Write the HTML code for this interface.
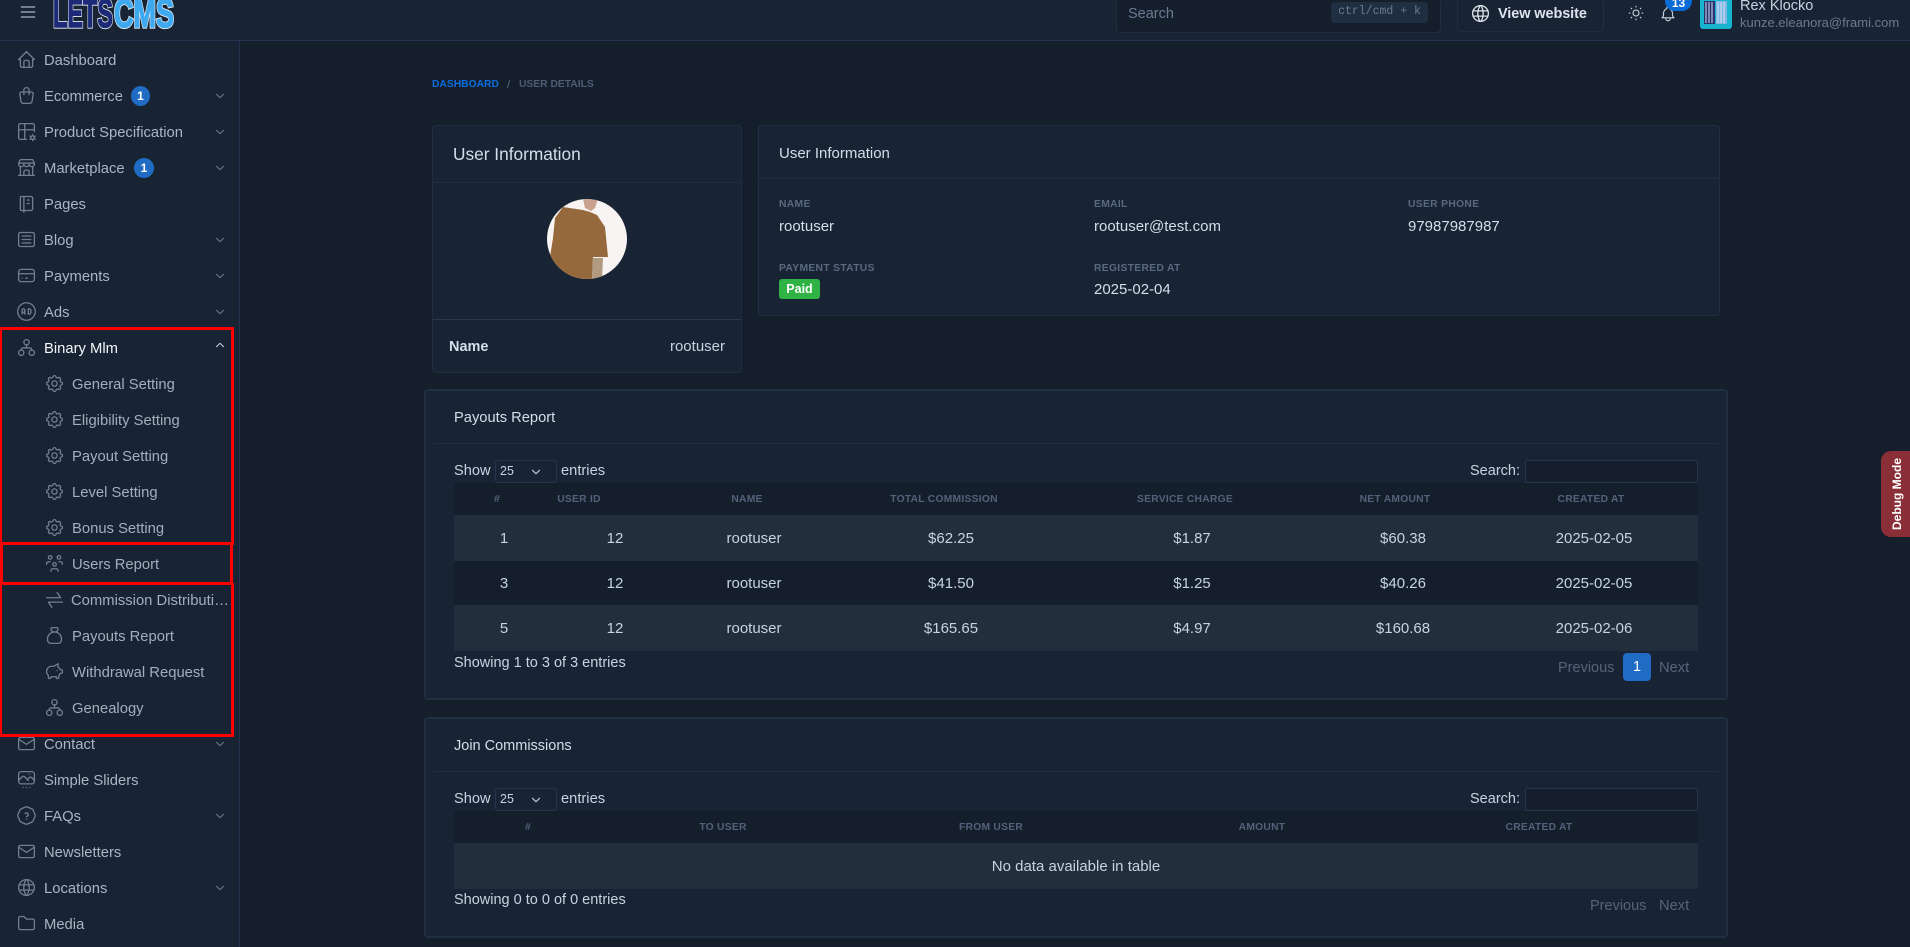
<!DOCTYPE html>
<html lang="en"><head><meta charset="utf-8"><title>User Details</title>
<style>
*{box-sizing:border-box}
html,body{margin:0;padding:0;width:1910px;height:947px;overflow:hidden;background:#151f2c}
body{font-family:"Liberation Sans",sans-serif;font-size:15px;color:#c8d3e1;position:relative}
.a{position:absolute;white-space:nowrap}
.t{position:absolute;white-space:nowrap;line-height:20px;margin-top:1px}
.c{transform:translateX(-50%)}
.r{transform:translateX(-100%)}
.box{position:absolute;background:#182433;border:1px solid #1f2e41;border-radius:4px}
.ln{position:absolute;height:1px;background:#1f2e41}
.nav{position:absolute;left:44px;line-height:20px;color:#aab5c4;font-size:14.800px;white-space:nowrap;margin-top:1px}
.sub{left:72px;color:#a3aebd}
svg.i{position:absolute;width:21px;height:21px;margin:-1px 0 0 -.5px;fill:none;stroke:#727f93;stroke-width:1.5;stroke-linecap:round;stroke-linejoin:round}
svg.ch{position:absolute;left:213px;width:14px;height:14px;fill:none;stroke:#6c7a91;stroke-width:1.800;stroke-linecap:round;stroke-linejoin:round}
.pill{position:absolute;background:#206bc4;color:#fff;border-radius:50%;width:19px;height:20px;font-size:12px;font-weight:bold;text-align:center;line-height:20px}
.rb{position:absolute;border:3px solid #f00}
.lb{position:absolute;font-size:10.300px;font-weight:bold;color:#5a6880;letter-spacing:.33px;line-height:14px;white-space:nowrap;margin-top:2px}
.th{position:absolute;font-size:10.300px;font-weight:bold;color:#53617a;letter-spacing:.25px;line-height:14px;white-space:nowrap;transform:translateX(-50%)}
.td{position:absolute;line-height:20px;font-size:15px;color:#c8d3e1;white-space:nowrap;transform:translateX(-50%)}
.sel{position:absolute;left:495px;width:62px;height:23px;border:1px solid #24354e;border-radius:3px;font-size:12.500px;line-height:21px;padding-left:4px;color:#c8d3e1}
.inp{position:absolute;left:1525px;width:173px;height:23px;background:#151f2c;border:1px solid #24354e;border-radius:2px}
</style></head><body>
<svg width="0" height="0" style="position:absolute"><defs>
<symbol id="home" viewBox="0 0 24 24"><path d="M5 12l-2 0l9 -9l9 9l-2 0M5 12v7a2 2 0 0 0 2 2h10a2 2 0 0 0 2 -2v-7M9 21v-6a2 2 0 0 1 2 -2h2a2 2 0 0 1 2 2v6"/></symbol>
<symbol id="bag" viewBox="0 0 24 24"><path d="M6.331 8h11.339a2 2 0 0 1 1.977 2.304l-1.255 8.152a3 3 0 0 1 -2.966 2.544h-6.852a3 3 0 0 1 -2.965 -2.544l-1.255 -8.152a2 2 0 0 1 1.977 -2.304zM9 11v-5a3 3 0 0 1 6 0v5"/></symbol>
<symbol id="tbl" viewBox="0 0 24 24"><path d="M12 21h-7a2 2 0 0 1 -2 -2v-14a2 2 0 0 1 2 -2h14a2 2 0 0 1 2 2v7M3 10h18M10 3v18"/><circle cx="19" cy="19" r="2"/><path d="M19 15.500v1.500M19 21v1.500M15.900 17.200l1.300 .8M20.800 20l1.300 .8M15.900 20.800l1.300 -.8M20.800 18l1.300 -.8"/></symbol>
<symbol id="store" viewBox="0 0 24 24"><path d="M3 21l18 0M3 7v1a3 3 0 0 0 6 0v-1m0 1a3 3 0 0 0 6 0v-1m0 1a3 3 0 0 0 6 0v-1h-18l2 -4h14l2 4M5 21l0 -10.150M19 21l0 -10.150M9 21v-4a2 2 0 0 1 2 -2h2a2 2 0 0 1 2 2v4"/></symbol>
<symbol id="note" viewBox="0 0 24 24"><path d="M6 4h11a2 2 0 0 1 2 2v12a2 2 0 0 1 -2 2h-11a1 1 0 0 1 -1 -1v-14a1 1 0 0 1 1 -1m3 0v18M13 8l2 0M13 12l2 0"/></symbol>
<symbol id="art" viewBox="0 0 24 24"><path d="M3 6a2 2 0 0 1 2 -2h14a2 2 0 0 1 2 2v12a2 2 0 0 1 -2 2h-14a2 2 0 0 1 -2 -2zM7 8h10M7 12h10M7 16h10"/></symbol>
<symbol id="card" viewBox="0 0 24 24"><path d="M3 8a3 3 0 0 1 3 -3h12a3 3 0 0 1 3 3v8a3 3 0 0 1 -3 3h-12a3 3 0 0 1 -3 -3zM3 10l18 0M7 15l.01 0M11 15l2 0"/></symbol>
<symbol id="ad" viewBox="0 0 24 24"><circle cx="12" cy="12" r="10"/><path d="M7 15v-4.500a1.500 1.500 0 0 1 3 0v4.500M7 13h3M14 9v6h1a2 2 0 0 0 2 -2v-2a2 2 0 0 0 -2 -2h-1z"/></symbol>
<symbol id="tree" viewBox="0 0 24 24"><circle cx="12" cy="6" r="3"/><circle cx="6" cy="18" r="3"/><circle cx="18" cy="18" r="3"/><path d="M12 9v3.500M6 15v-.5a2 2 0 0 1 2 -2h8a2 2 0 0 1 2 2v.5"/></symbol>
<symbol id="gear" viewBox="0 0 24 24"><path d="M10.325 4.317c.426 -1.756 2.924 -1.756 3.350 0a1.724 1.724 0 0 0 2.573 1.066c1.543 -.940 3.310 .826 2.370 2.370a1.724 1.724 0 0 0 1.065 2.572c1.756 .426 1.756 2.924 0 3.350a1.724 1.724 0 0 0 -1.066 2.573c.940 1.543 -.826 3.310 -2.370 2.370a1.724 1.724 0 0 0 -2.572 1.065c-.426 1.756 -2.924 1.756 -3.350 0a1.724 1.724 0 0 0 -2.573 -1.066c-1.543 .940 -3.310 -.826 -2.370 -2.370a1.724 1.724 0 0 0 -1.065 -2.572c-1.756 -.426 -1.756 -2.924 0 -3.350a1.724 1.724 0 0 0 1.066 -2.573c-.940 -1.543 .826 -3.310 2.370 -2.370c1 .608 2.296 .070 2.572 -1.065z"/><circle cx="12" cy="12" r="3"/></symbol>
<symbol id="users" viewBox="0 0 24 24"><path d="M10 13a2 2 0 1 0 4 0a2 2 0 0 0 -4 0M8 21v-1a2 2 0 0 1 2 -2h4a2 2 0 0 1 2 2v1M15 5a2 2 0 1 0 4 0a2 2 0 0 0 -4 0M17 10h2a2 2 0 0 1 2 2v1M5 5a2 2 0 1 0 4 0a2 2 0 0 0 -4 0M3 13v-1a2 2 0 0 1 2 -2h2"/></symbol>
<symbol id="swap" viewBox="0 0 24 24"><path d="M3 10h16l-4 -6M21 15h-16l4 6"/></symbol>
<symbol id="money" viewBox="0 0 24 24"><path d="M9.500 3h5a1.500 1.500 0 0 1 1.500 1.500a3.500 3.500 0 0 1 -3.500 3.500h-1a3.500 3.500 0 0 1 -3.500 -3.500a1.500 1.500 0 0 1 1.500 -1.500zM4 17v-1a8 8 0 1 1 16 0v1a4 4 0 0 1 -4 4h-8a4 4 0 0 1 -4 -4z"/></symbol>
<symbol id="pig" viewBox="0 0 24 24"><path d="M15 11v.01M16 3l0 3.803a6.019 6.019 0 0 1 2.658 3.197h1.341a1 1 0 0 1 1 1v2a1 1 0 0 1 -1 1h-1.342a6.008 6.008 0 0 1 -1.658 2.473v2.027a1.500 1.500 0 0 1 -3 0v-.583a6.040 6.040 0 0 1 -1 .083h-4a6.040 6.040 0 0 1 -1 -.083v.583a1.500 1.500 0 0 1 -3 0v-2l0 -.027a6 6 0 0 1 4 -10.473h2.500l4.500 -3z"/></symbol>
<symbol id="mail" viewBox="0 0 24 24"><path d="M3 7a2 2 0 0 1 2 -2h14a2 2 0 0 1 2 2v10a2 2 0 0 1 -2 2h-14a2 2 0 0 1 -2 -2v-10zM3 7l9 6l9 -6"/></symbol>
<symbol id="slide" viewBox="0 0 24 24"><path d="M15 6l.01 0M3 6a3 3 0 0 1 3 -3h12a3 3 0 0 1 3 3v8a3 3 0 0 1 -3 3h-12a3 3 0 0 1 -3 -3zM3 13l4 -4a3 5 0 0 1 3 0l4 4M13 12l2 -2a3 5 0 0 1 3 0l3 3M8 21l.01 0M12 21l.01 0M16 21l.01 0"/></symbol>
<symbol id="help" viewBox="0 0 24 24"><path d="M12.802 2.165l5.575 2.389c.480 .206 .863 .589 1.070 1.070l2.388 5.574c.220 .512 .220 1.092 0 1.604l-2.389 5.575c-.206 .480 -.589 .863 -1.070 1.070l-5.574 2.388c-.512 .220 -1.092 .220 -1.604 0l-5.575 -2.389a2.036 2.036 0 0 1 -1.070 -1.070l-2.388 -5.574a2.036 2.036 0 0 1 0 -1.604l2.389 -5.575c.206 -.480 .589 -.863 1.070 -1.070l5.574 -2.388a2.036 2.036 0 0 1 1.604 0zM12 16v.01M12 13a2 2 0 0 0 .914 -3.782a1.980 1.980 0 0 0 -2.414 .483"/></symbol>
<symbol id="world" viewBox="0 0 24 24"><path d="M3 12a9 9 0 1 0 18 0a9 9 0 0 0 -18 0M3.600 9h16.800M3.600 15h16.800M11.500 3a17 17 0 0 0 0 18M12.500 3a17 17 0 0 1 0 18"/></symbol>
<symbol id="folder" viewBox="0 0 24 24"><path d="M5 4h4l3 3h7a2 2 0 0 1 2 2v8a2 2 0 0 1 -2 2h-14a2 2 0 0 1 -2 -2v-11a2 2 0 0 1 2 -2"/></symbol>
<symbol id="sun" viewBox="0 0 24 24"><path d="M8 12a4 4 0 1 0 8 0a4 4 0 1 0 -8 0M3 12h1m8 -9v1m8 8h1m-9 8v1m-6.400 -15.400l.7 .7m12.100 -.7l-.7 .7m0 11.400l.7 .7m-12.100 -.7l-.7 .7"/></symbol>
<symbol id="bell" viewBox="0 0 24 24"><path d="M10 5a2 2 0 1 1 4 0a7 7 0 0 1 4 6v3a4 4 0 0 0 2 3h-16a4 4 0 0 0 2 -3v-3a7 7 0 0 1 4 -6M9 17v1a3 3 0 0 0 6 0v-1"/></symbol>
<symbol id="menu" viewBox="0 0 24 24"><path d="M4 6l16 0M4 12l16 0M4 18l16 0"/></symbol>
<symbol id="dn" viewBox="0 0 24 24"><path d="M6 9l6 6l6 -6"/></symbol>
<symbol id="up" viewBox="0 0 24 24"><path d="M6 15l6 -6l6 6"/></symbol>
</defs></svg>

<!-- topbar -->
<div class="a" style="left:0;top:0;width:1910px;height:41px;background:#182433;border-bottom:1px solid #233350"></div>
<svg class="i" style="left:18px;top:3px;stroke:#aab5c4;width:20px;height:20px"><use href="#menu"/></svg>
<svg class="a" style="left:50px;top:0" width="130" height="32" viewBox="0 0 130 32">
<g font-family="Liberation Sans" font-weight="bold" font-size="40">
<text x="3" y="27" textLength="60" lengthAdjust="spacingAndGlyphs" fill="#e8eef5" stroke="#e8eef5" stroke-width="3.200">LETS</text>
<text x="64" y="27" textLength="60" lengthAdjust="spacingAndGlyphs" fill="#e8eef5" stroke="#e8eef5" stroke-width="3.200">CMS</text>
<text x="3" y="27" textLength="60" lengthAdjust="spacingAndGlyphs" fill="#1c2a78" stroke="#1c2a78" stroke-width="1.400">LETS</text>
<text x="64" y="27" textLength="60" lengthAdjust="spacingAndGlyphs" fill="#3fa9f0" stroke="#3fa9f0" stroke-width="1.400">CMS</text>
</g></svg>
<div class="a" style="left:1116px;top:-2px;width:325px;height:35px;background:#151f2c;border:1px solid #1f2e41;border-radius:4px"></div>
<div class="t" style="left:1128px;top:3px;color:#6c7a91;font-size:14.500px">Search</div>
<div class="a" style="left:1331px;top:2px;width:97px;height:21px;background:#1f2e41;border-radius:4px;color:#6c7a91;font:11.500px/20px 'Liberation Mono',monospace;text-align:center">ctrl/cmd + k</div>
<div class="a" style="left:1457px;top:-2px;width:147px;height:34px;border:1px solid #1f2e41;border-radius:4px;background:#182433"></div>
<svg class="i" style="left:1470px;top:4px;stroke:#dfe5ec"><use href="#world"/></svg>
<div class="t" style="left:1498px;top:3px;color:#dce3ec;font-size:14.500px;font-weight:bold;letter-spacing:-.1px">View website</div>
<svg class="i" style="left:1627px;top:5px;width:18px;height:18px;stroke:#c8d3e1"><use href="#sun"/></svg>
<svg class="i" style="left:1659px;top:6px;width:18px;height:18px;stroke:#c8d3e1"><use href="#bell"/></svg>
<div class="a" style="left:1665px;top:-9px;width:27px;height:20px;background:#0a6ad6;border-radius:10px;color:#fff;font-size:12px;font-weight:bold;line-height:20px;text-align:center;padding-top:2px">13</div>
<svg class="a" style="left:1700px;top:0" width="32" height="29" viewBox="0 0 32 29"><rect x="0" y="-4" width="32" height="33" rx="3" fill="#18b4cf"/><rect x="4" y="1" width="11" height="23" fill="#2a3270"/><rect x="16" y="1" width="11" height="23" fill="#7fb7e6"/><path d="M6 2v21M9 2v21M12 2v21M18 2v21M21 2v21M24 2v21" stroke="#d7e3ef" stroke-width="1"/></svg>
<div class="t" style="left:1740px;top:-5px;font-size:14.500px;color:#c8d3e1">Rex Klocko</div>
<div class="t" style="left:1740px;top:12px;font-size:13px;color:#6c7a91">kunze.eleanora@frami.com</div>

<!-- sidebar -->
<div class="a" style="left:0;top:41px;width:240px;height:906px;background:#182433;border-right:1px solid #233350"></div>

<svg class="i" style="left:16px;top:50px"><use href="#home"/></svg><div class="nav" style="top:50px">Dashboard</div>
<svg class="i" style="left:16px;top:86px"><use href="#bag"/></svg><div class="nav" style="top:86px">Ecommerce</div><div class="pill" style="left:131px;top:86px">1</div><svg class="ch" style="top:89px"><use href="#dn"/></svg>
<svg class="i" style="left:16px;top:122px"><use href="#tbl"/></svg><div class="nav" style="top:122px">Product Specification</div><svg class="ch" style="top:125px"><use href="#dn"/></svg>
<svg class="i" style="left:16px;top:158px"><use href="#store"/></svg><div class="nav" style="top:158px">Marketplace</div><div class="pill" style="left:134px;top:158px;width:20px">1</div><svg class="ch" style="top:161px"><use href="#dn"/></svg>
<svg class="i" style="left:16px;top:194px"><use href="#note"/></svg><div class="nav" style="top:194px">Pages</div>
<svg class="i" style="left:16px;top:230px"><use href="#art"/></svg><div class="nav" style="top:230px">Blog</div><svg class="ch" style="top:233px"><use href="#dn"/></svg>
<svg class="i" style="left:16px;top:266px"><use href="#card"/></svg><div class="nav" style="top:266px">Payments</div><svg class="ch" style="top:269px"><use href="#dn"/></svg>
<svg class="i" style="left:16px;top:302px"><use href="#ad"/></svg><div class="nav" style="top:302px">Ads</div><svg class="ch" style="top:305px"><use href="#dn"/></svg>
<svg class="i" style="left:16px;top:338px"><use href="#tree"/></svg><div class="nav" style="top:338px;color:#f4f6fa">Binary Mlm</div><svg class="ch" style="top:338px;stroke:#c8d3e1"><use href="#up"/></svg>

<svg class="i" style="left:44px;top:374px"><use href="#gear"/></svg><div class="nav sub" style="top:374px">General Setting</div>
<svg class="i" style="left:44px;top:410px"><use href="#gear"/></svg><div class="nav sub" style="top:410px">Eligibility Setting</div>
<svg class="i" style="left:44px;top:446px"><use href="#gear"/></svg><div class="nav sub" style="top:446px">Payout Setting</div>
<svg class="i" style="left:44px;top:482px"><use href="#gear"/></svg><div class="nav sub" style="top:482px">Level Setting</div>
<svg class="i" style="left:44px;top:518px"><use href="#gear"/></svg><div class="nav sub" style="top:518px">Bonus Setting</div>
<svg class="i" style="left:44px;top:554px"><use href="#users"/></svg><div class="nav sub" style="top:554px">Users Report</div>
<svg class="i" style="left:44px;top:590px"><use href="#swap"/></svg><div class="nav sub" style="top:590px;left:71px;width:158px;overflow:hidden;text-overflow:ellipsis">Commission Distribution</div>
<svg class="i" style="left:44px;top:626px"><use href="#money"/></svg><div class="nav sub" style="top:626px">Payouts Report</div>
<svg class="i" style="left:44px;top:662px"><use href="#pig"/></svg><div class="nav sub" style="top:662px">Withdrawal Request</div>
<svg class="i" style="left:44px;top:698px"><use href="#tree"/></svg><div class="nav sub" style="top:698px">Genealogy</div>

<svg class="i" style="left:16px;top:734px"><use href="#mail"/></svg><div class="nav" style="top:734px">Contact</div><svg class="ch" style="top:737px"><use href="#dn"/></svg>
<svg class="i" style="left:16px;top:770px"><use href="#slide"/></svg><div class="nav" style="top:770px">Simple Sliders</div>
<svg class="i" style="left:16px;top:806px"><use href="#help"/></svg><div class="nav" style="top:806px">FAQs</div><svg class="ch" style="top:809px"><use href="#dn"/></svg>
<svg class="i" style="left:16px;top:842px"><use href="#mail"/></svg><div class="nav" style="top:842px">Newsletters</div>
<svg class="i" style="left:16px;top:878px"><use href="#world"/></svg><div class="nav" style="top:878px">Locations</div><svg class="ch" style="top:881px"><use href="#dn"/></svg>
<svg class="i" style="left:16px;top:914px"><use href="#folder"/></svg><div class="nav" style="top:914px">Media</div>

<!-- red annotation boxes -->
<div class="rb" style="left:-1px;top:327px;width:235px;height:218px"></div>
<div class="rb" style="left:0;top:542px;width:233px;height:43px"></div>
<div class="rb" style="left:-1px;top:583px;width:235px;height:154px;border-top-width:2px"></div>

<!-- breadcrumb -->
<div class="t" style="left:432px;top:74px;font-size:10.300px;font-weight:bold;color:#0a6fe0">DASHBOARD</div>
<div class="t" style="left:507px;top:74px;font-size:11px;color:#5a6880">/</div>
<div class="t" style="left:519px;top:74px;font-size:10.300px;font-weight:bold;color:#4f5d75">USER DETAILS</div>

<!-- user card -->
<div class="box" style="left:432px;top:125px;width:310px;height:248px"></div>
<div class="ln" style="left:433px;top:182px;width:308px"></div>
<div class="ln" style="left:433px;top:319px;width:308px;background:#2a394d"></div>
<div class="t" style="left:453px;top:143px;font-size:17.300px;color:#d5deea">User Information</div>
<svg class="a" style="left:547px;top:199px" width="80" height="80" viewBox="0 0 80 80">
<defs><clipPath id="cp"><circle cx="40" cy="40" r="40"/></clipPath></defs>
<g clip-path="url(#cp)"><rect width="80" height="80" fill="#f7f4f3"/>
<path d="M36 0h15l-3 9 -4 3 -6-3z" fill="#c9a28e"/>
<path d="M16 8 36 11 43 13 50 16 58 28 61 58 46 58 45 80 13 80 3 58 6 39 8 19z" fill="#96693d"/>
<path d="M46 59 56 59 55 80 45 80z" fill="#b09a80"/>
</g></svg>
<div class="t" style="left:449px;top:336px;font-size:14.500px;font-weight:bold;color:#d5deea">Name</div>
<div class="t r" style="left:725px;top:336px;color:#c8d3e1">rootuser</div>

<!-- info card -->
<div class="box" style="left:758px;top:125px;width:962px;height:191px"></div>
<div class="ln" style="left:759px;top:178px;width:960px"></div>
<div class="t" style="left:779px;top:143px;font-size:15px;color:#d5deea">User Information</div>
<div class="lb" style="left:779px;top:196px">NAME</div>
<div class="t" style="left:779px;top:216px;color:#d5deea">rootuser</div>
<div class="lb" style="left:1094px;top:196px">EMAIL</div>
<div class="t" style="left:1094px;top:216px;color:#d5deea">rootuser@test.com</div>
<div class="lb" style="left:1408px;top:196px">USER PHONE</div>
<div class="t" style="left:1408px;top:216px;color:#d5deea">97987987987</div>
<div class="lb" style="left:779px;top:260px">PAYMENT STATUS</div>
<div class="a" style="left:779px;top:279px;width:41px;height:20px;background:#2fb344;border-radius:3px;color:#fff;font-size:12.500px;font-weight:bold;line-height:20px;text-align:center">Paid</div>
<div class="lb" style="left:1094px;top:260px">REGISTERED AT</div>
<div class="t" style="left:1094px;top:279px;color:#d5deea">2025-02-04</div>

<!-- payouts card -->
<div class="box" style="left:424px;top:389px;width:1304px;height:311px;border-width:2px"></div>
<div class="ln" style="left:434px;top:443px;width:1284px"></div>
<div class="t" style="left:454px;top:407px;font-size:14.700px;color:#d5deea">Payouts Report</div>
<div class="t" style="left:454px;top:460px;font-size:14.600px">Show</div>
<div class="sel" style="top:460px">25</div>
<svg class="ch" style="left:529px;top:465px;stroke:#c8d3e1;stroke-width:2"><use href="#dn"/></svg>
<div class="t" style="left:561px;top:460px;font-size:14.700px">entries</div>
<div class="t r" style="left:1520px;top:460px;font-size:14.500px">Search:</div>
<div class="inp" style="top:460px"></div>

<div class="a" style="left:454px;top:483px;width:1244px;height:32px;background:#151f2c"></div>
<div class="a" style="left:454px;top:515px;width:1244px;height:46px;background:#232e3c"></div>
<div class="a" style="left:454px;top:561px;width:1244px;height:44px;background:#151f2c"></div>
<div class="a" style="left:454px;top:605px;width:1244px;height:46px;background:#232e3c"></div>

<div class="th" style="left:497px;top:493px">#</div>
<div class="th" style="left:579px;top:493px">USER ID</div>
<div class="th" style="left:747px;top:493px">NAME</div>
<div class="th" style="left:944px;top:493px">TOTAL COMMISSION</div>
<div class="th" style="left:1185px;top:493px">SERVICE CHARGE</div>
<div class="th" style="left:1395px;top:493px">NET AMOUNT</div>
<div class="th" style="left:1591px;top:493px">CREATED AT</div>

<div class="td" style="left:504px;top:529px">1</div><div class="td" style="left:615px;top:529px">12</div><div class="td" style="left:754px;top:529px">rootuser</div><div class="td" style="left:951px;top:529px">$62.25</div><div class="td" style="left:1192px;top:529px">$1.87</div><div class="td" style="left:1403px;top:529px">$60.38</div><div class="td" style="left:1594px;top:529px">2025-02-05</div>
<div class="td" style="left:504px;top:574px">3</div><div class="td" style="left:615px;top:574px">12</div><div class="td" style="left:754px;top:574px">rootuser</div><div class="td" style="left:951px;top:574px">$41.50</div><div class="td" style="left:1192px;top:574px">$1.25</div><div class="td" style="left:1403px;top:574px">$40.26</div><div class="td" style="left:1594px;top:574px">2025-02-05</div>
<div class="td" style="left:504px;top:619px">5</div><div class="td" style="left:615px;top:619px">12</div><div class="td" style="left:754px;top:619px">rootuser</div><div class="td" style="left:951px;top:619px">$165.65</div><div class="td" style="left:1192px;top:619px">$4.97</div><div class="td" style="left:1403px;top:619px">$160.68</div><div class="td" style="left:1594px;top:619px">2025-02-06</div>

<div class="t" style="left:454px;top:652px;font-size:14.500px">Showing 1 to 3 of 3 entries</div>
<div class="t" style="left:1558px;top:657px;color:#56647b;font-size:14.500px">Previous</div>
<div class="a" style="left:1623px;top:653px;width:28px;height:28px;background:#206bc4;border-radius:4px;color:#fff;font-size:14.500px;line-height:28px;text-align:center">1</div>
<div class="t" style="left:1659px;top:657px;color:#56647b;font-size:14.700px">Next</div>

<!-- join card -->
<div class="box" style="left:424px;top:717px;width:1304px;height:221px;border-width:2px"></div>
<div class="ln" style="left:434px;top:771px;width:1284px"></div>
<div class="t" style="left:454px;top:735px;font-size:14.500px;color:#d5deea">Join Commissions</div>
<div class="t" style="left:454px;top:788px;font-size:14.600px">Show</div>
<div class="sel" style="top:788px">25</div>
<svg class="ch" style="left:529px;top:793px;stroke:#c8d3e1;stroke-width:2"><use href="#dn"/></svg>
<div class="t" style="left:561px;top:788px;font-size:14.700px">entries</div>
<div class="t r" style="left:1520px;top:788px;font-size:14.500px">Search:</div>
<div class="inp" style="top:788px"></div>
<div class="a" style="left:454px;top:811px;width:1244px;height:32px;background:#151f2c"></div>
<div class="a" style="left:454px;top:843px;width:1244px;height:46px;background:#232e3c"></div>
<div class="th" style="left:528px;top:821px">#</div>
<div class="th" style="left:723px;top:821px">TO USER</div>
<div class="th" style="left:991px;top:821px">FROM USER</div>
<div class="th" style="left:1262px;top:821px">AMOUNT</div>
<div class="th" style="left:1539px;top:821px">CREATED AT</div>
<div class="td" style="left:1076px;top:857px">No data available in table</div>
<div class="t" style="left:454px;top:889px;font-size:14.500px">Showing 0 to 0 of 0 entries</div>
<div class="t" style="left:1590px;top:895px;color:#56647b;font-size:14.500px">Previous</div>
<div class="t" style="left:1659px;top:895px;color:#56647b;font-size:14.700px">Next</div>

<!-- debug tab -->
<div class="a" style="left:1881px;top:451px;width:29px;height:86px;background:#8a2f38;border-radius:10px 0 0 10px"></div>
<div class="a" style="left:1897px;top:494px;transform:translate(-50%,-50%) rotate(-90deg);color:#fff;font-size:12px;font-weight:bold;line-height:14px">Debug Mode</div>
</body></html>
